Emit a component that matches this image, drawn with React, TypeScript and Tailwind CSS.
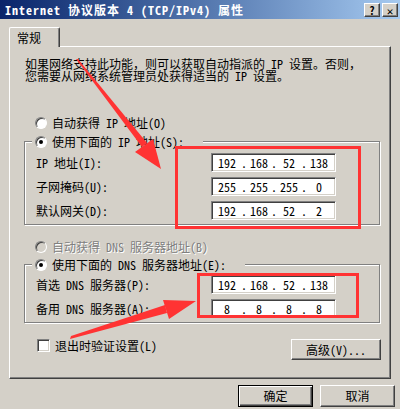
import React from 'react';

const raised =
  'border border-t-white border-l-white border-r-[#404040] border-b-[#404040] shadow-[inset_-1px_-1px_0_#808080]';
const sunken =
  'border border-t-[#808080] border-l-[#808080] border-r-white border-b-white shadow-[inset_1px_1px_0_#404040,inset_-1px_-1px_0_#d4d0c8]';
const etched = 'border border-[#808080] shadow-[1px_1px_0_#fff,inset_1px_1px_0_#fff]';

function Radio({ checked = false, disabled = false }: { checked?: boolean; disabled?: boolean }) {
  return (
    <span
      className={`flex h-[12px] w-[12px] shrink-0 items-center justify-center rounded-full border border-t-[#808080] border-l-[#808080] border-r-white border-b-white shadow-[inset_1px_1px_0_#404040] ${
        disabled ? 'bg-[#d4d0c8]' : 'bg-white'
      }`}
    >
      {checked && <span className="h-[4px] w-[4px] rounded-full bg-black" />}
    </span>
  );
}

function IpBox({ parts }: { parts: string[] }) {
  return (
    <div className={`flex h-[19px] w-[125px] items-center bg-white pl-[1px] ${sunken}`}>
      <span className="w-[28px] text-center">{parts[0]}</span>
      <span className="w-[6px] text-center">.</span>
      <span className="w-[24px] text-center">{parts[1]}</span>
      <span className="w-[6px] text-center">.</span>
      <span className="w-[24px] text-center">{parts[2]}</span>
      <span className="w-[6px] text-center">.</span>
      <span className="w-[24px] text-center">{parts[3]}</span>
    </div>
  );
}

function Row({ label, parts }: { label: string; parts: string[] }) {
  return (
    <div className="flex h-[19px] items-center">
      <span className="w-[175px] whitespace-nowrap">{label}</span>
      <IpBox parts={parts} />
    </div>
  );
}

export default function App() {
  return (
    <div className="relative h-[409px] w-[400px] overflow-hidden bg-[#d4d0c8] text-[12px] leading-[12px] text-black font-['Noto_Sans_Mono_CJK_SC','Noto_Sans_CJK_SC',monospace]">
      {/* title bar */}
      <div className="flex h-[19px] items-center justify-between bg-linear-to-r from-[#0a246a] to-[#a6caf0] pl-[5px] pr-[2px]">
        <span className="whitespace-nowrap font-bold tracking-[1px] text-white">
          Internet 协议版本 4 (TCP/IPv4) 属性
        </span>
        <div className="flex gap-[2px]">
          <span className={`flex h-[14px] w-[16px] items-center justify-center bg-[#d4d0c8] font-bold text-[11px] ${raised}`}>?</span>
          <span className={`flex h-[14px] w-[16px] items-center justify-center bg-[#d4d0c8] font-bold text-[11px] ${raised}`}>✕</span>
        </div>
      </div>

      {/* tab */}
      <div className="ml-[9px] mt-[8px] flex">
        <div className="relative z-10 flex h-[20px] w-[51px] items-center rounded-t-[2px] border-l border-t border-r border-l-white border-t-white border-r-[#404040] bg-[#d4d0c8] pl-[7px] shadow-[inset_-1px_0_0_#808080]">
          常规
        </div>
      </div>

      {/* panel */}
      <div className={`-mt-[1px] ml-[9px] h-[333px] w-[382px] pl-[14px] pr-[9px] ${raised}`}>
        <div className="ml-[1px] mt-[11px] whitespace-nowrap">
          <div>如果网络支持此功能，则可以获取自动指派的 IP 设置。否则，</div>
          <div>您需要从网络系统管理员处获得适当的 IP 设置。</div>
        </div>

        <div className="ml-[11px] mt-[34px] flex h-[13px] items-center gap-[5px]">
          <Radio />
          <span>自动获得 IP 地址(O)</span>
        </div>

        <fieldset className={`mt-[6px] w-[356px] px-0 ${etched}`}>
          <legend className="ml-[7px] flex h-[13px] w-[171px] items-center gap-[5px] bg-[#d4d0c8] pl-[3px]">
            <Radio checked />
            <span className="whitespace-nowrap">使用下面的 IP 地址(S):</span>
          </legend>
          <div className="flex flex-col gap-[5px] pb-[4px] pl-[11px] pt-[5px]">
            <Row label="IP 地址(I):" parts={['192', '168', '52', '138']} />
            <Row label="子网掩码(U):" parts={['255', '255', '255', '0']} />
            <Row label="默认网关(D):" parts={['192', '168', '52', '2']} />
          </div>
        </fieldset>

        <div className="ml-[11px] mt-[15px] flex h-[13px] items-center gap-[5px]">
          <Radio disabled />
          <span className="text-[#808080] [text-shadow:1px_1px_0_#fff]">自动获得 DNS 服务器地址(B)</span>
        </div>

        <fieldset className={`mt-[5px] w-[356px] px-0 ${etched}`}>
          <legend className="ml-[7px] flex h-[13px] w-[213px] items-center gap-[5px] bg-[#d4d0c8] pl-[3px]">
            <Radio checked />
            <span className="whitespace-nowrap">使用下面的 DNS 服务器地址(E):</span>
          </legend>
          <div className="flex flex-col gap-[5px] pb-[4px] pl-[11px] pt-[4px]">
            <Row label="首选 DNS 服务器(P):" parts={['192', '168', '52', '138']} />
            <Row label="备用 DNS 服务器(A):" parts={['8', '8', '8', '8']} />
          </div>
        </fieldset>

        <div className="mt-[16px] flex items-start justify-between">
          <div className="ml-[13px] flex h-[13px] items-center gap-[5px]">
            <span className={`h-[13px] w-[13px] bg-white ${sunken}`} />
            <span>退出时验证设置(L)</span>
          </div>
          <button className={`flex h-[21px] w-[90px] items-center justify-center bg-[#d4d0c8] ${raised}`}>
            高级(V)...
          </button>
        </div>
      </div>

      {/* dialog buttons */}
      <div className="mt-[6px] flex justify-end gap-[7px] pr-[5px]">
        <button className="flex h-[22px] w-[75px] items-center justify-center border border-black bg-[#d4d0c8] shadow-[inset_1px_1px_0_#fff,inset_-1px_-1px_0_#404040,inset_-2px_-2px_0_#808080]">
          确定
        </button>
        <button className={`flex h-[22px] w-[75px] items-center justify-center bg-[#d4d0c8] ${raised}`}>
          取消
        </button>
      </div>

      {/* annotations */}
      <div className="absolute left-[175px] top-[146px] h-[83px] w-[186px] border-[3px] border-[#ff3333]" />
      <div className="absolute left-[197px] top-[273px] h-[45px] w-[162px] border-[3px] border-[#ff3333]" />
      <svg className="absolute left-0 top-0" width="400" height="409" viewBox="0 0 400 409">
        <polygon points="76,59 78,59 147,143 142,147" fill="#ff3333" />
        <polygon points="135,152 153,139 161,169" fill="#ff3333" />
        <polygon points="70,339 71,336 165,305 167,313" fill="#ff3333" />
        <polygon points="163,300 169,319 196,301" fill="#ff3333" />
      </svg>
    </div>
  );
}
